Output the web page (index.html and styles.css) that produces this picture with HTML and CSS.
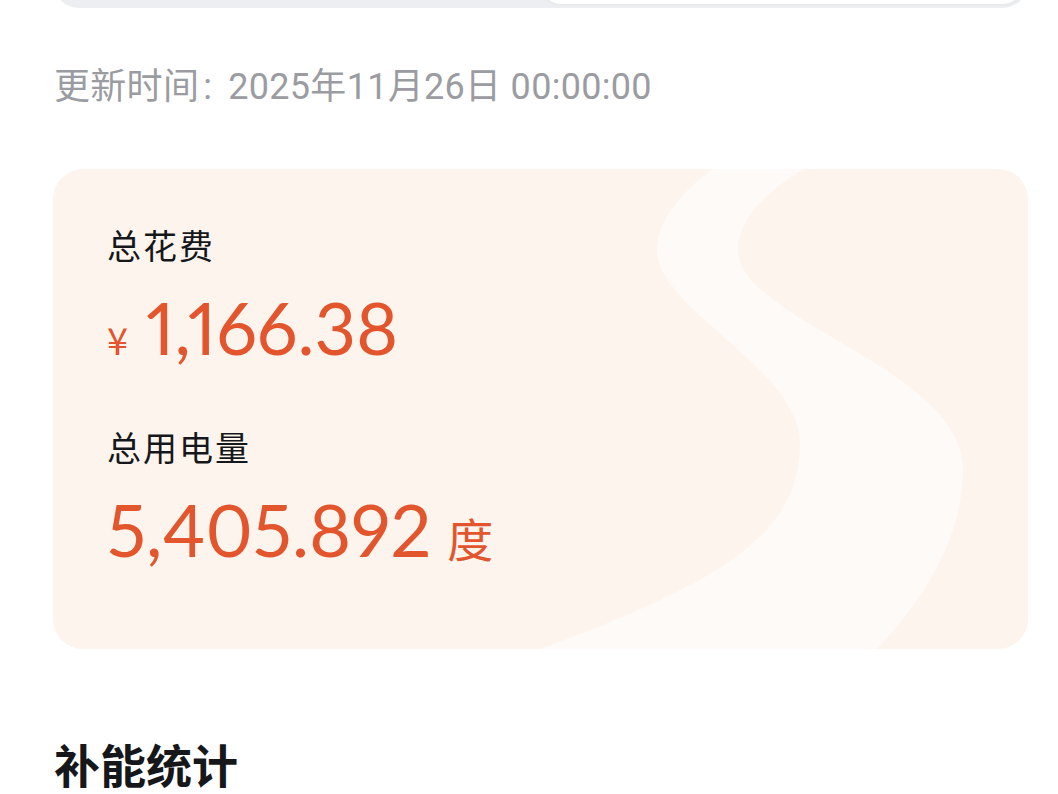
FILE: index.html
```html
<!DOCTYPE html>
<html lang="zh-CN">
<head>
    <meta charset="UTF-8">
    <meta name="viewport" content="width=device-width, initial-scale=1.0">
    <title>补能统计</title>
    <link rel="stylesheet" href="styles.css">
</head>
<body>
    <div class="page">
        <div class="seg">
            <div class="seg-item"></div>
            <div class="seg-item seg-on"></div>
        </div>

        <p class="updated">更新时间<span class="colon">:</span>2025年11月26日 00:00:00</p>

        <div class="card">
            <svg class="ribbon" viewBox="0 0 975 480" preserveAspectRatio="none">
                <path d="M660,0 C625,25 604,55 604,81 C604,140 747,200 747,274 C747,360 680,410 487,480 L824,480 C880,420 910,360 910,300 C910,200 685,150 685,82 C685,45 720,20 750,0 Z" fill="#fefaf7"/>
            </svg>
            <div class="stat">
                <div class="stat-label">总花费</div>
                <div class="stat-value"><span class="unit-pre">¥</span>1,166.38</div>
            </div>
            <div class="stat">
                <div class="stat-label">总用电量</div>
                <div class="stat-value">5,405.892<span class="unit-post">度</span></div>
            </div>
        </div>

        <h2 class="section-title">补能统计</h2>
    </div>
</body>
</html>
```

FILE: styles.css
```css
body {
    margin: 0;
    background-color: #ffffff;
    font-family: "Noto Sans CJK SC", sans-serif;
    color: #16171a;
    overflow: hidden;
}

.page {
    padding: 0 30px 0 53px;
}

/* tab switch, only its lower edge is visible */
.seg {
    display: flex;
    height: 60px;
    margin-top: -52px;
    background-color: #eceef1;
    border-radius: 26px;
    padding: 0 2px 2px 0;
    box-sizing: border-box;
}

.seg-item {
    flex: 1;
}

.seg-on {
    background-color: #ffffff;
    border: 2px solid #e9eaec;
    border-radius: 24px;
}

.updated {
    margin: 55px 0 0 1px;
    font-family: "Roboto", "Noto Sans CJK SC", sans-serif;
    font-size: 36px;
    line-height: 48px;
    letter-spacing: 0.3px;
    color: #9b9ca1;
}

.colon {
    margin: 0 16px 0 4px;
}

.card {
    position: relative;
    overflow: hidden;
    margin-top: 58px;
    height: 480px;
    box-sizing: border-box;
    padding: 53px 54px 0;
    background-color: #fdf4ee;
    border-radius: 30px;
}

.ribbon {
    position: absolute;
    left: 0;
    top: 0;
    width: 100%;
    height: 100%;
}

.stat {
    position: relative;
    margin-bottom: 40px;
}

.stat-label {
    font-size: 34px;
    line-height: 46px;
    letter-spacing: 2px;
}

.stat-value {
    margin-top: 14px;
    font-family: "Lato", "Noto Sans CJK SC", sans-serif;
    font-variant-numeric: proportional-nums;
    font-size: 72px;
    line-height: 90px;
    color: #e2552d;
}

.unit-pre {
    font-family: "Noto Sans CJK SC", sans-serif;
    font-size: 38px;
    margin-right: 18px;
}

.unit-post {
    font-family: "Noto Sans CJK SC", sans-serif;
    font-size: 46px;
    margin-left: 16px;
}

.section-title {
    margin: 84px 0 0 1px;
    font-size: 46px;
    line-height: 60px;
    font-weight: 700;
}
```
